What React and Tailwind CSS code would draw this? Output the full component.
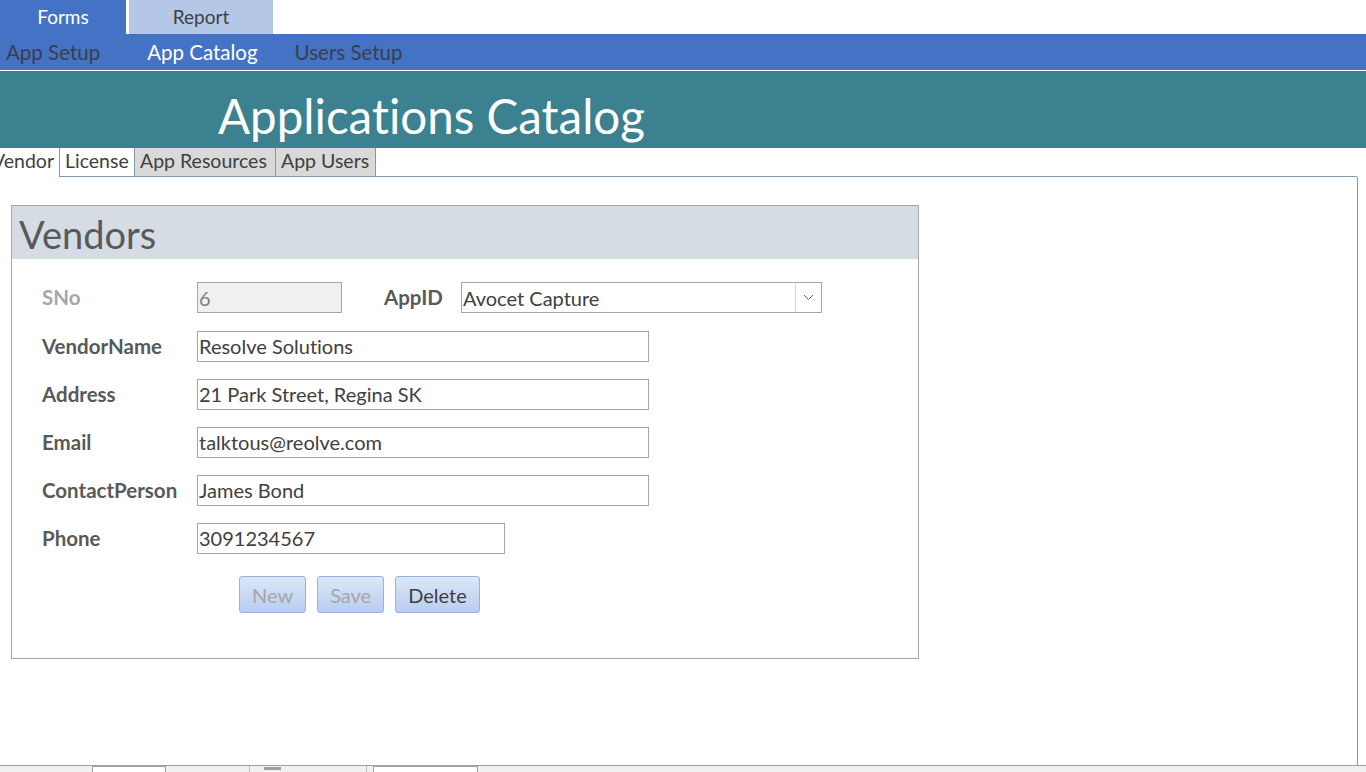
import React from 'react';

const font = { fontFamily: 'Lato, "Open Sans", sans-serif' };

const Field = ({ label, value, width = 'w-[452px]', muted }) => (
  <div className="flex items-center h-[30px]">
    <div className={`w-[185px] pl-[30px] text-[20.5px] font-bold whitespace-nowrap ${muted ? 'text-[#a6a6a6]' : 'text-[#595959]'}`}>
      {label}
    </div>
    <div className={`${width} h-[31px] border border-[#a6a6a6] bg-white flex items-center pl-[1px] text-[20px] text-[#404040]`}>
      {value}
    </div>
  </div>
);

const Btn = ({ children, disabled }) => (
  <button
    className={`h-[37px] px-[12px] rounded-[3px] border border-[#95b3e0] bg-gradient-to-b from-[#dce7f8] to-[#b9cdf0] text-[20px] ${disabled ? 'text-[#a6a6a6]' : 'text-[#404040]'}`}
  >
    {children}
  </button>
);

export default function App() {
  return (
    <div style={font} className="w-[1366px] h-[772px] overflow-hidden bg-white flex flex-col [font-variant-ligatures:none]">
      {/* top tabs */}
      <div className="h-[34px] flex items-end">
        <div className="w-[126px] h-[34px] bg-[#4472c4] text-white text-[19px] flex items-center justify-center">Forms</div>
        <div className="w-[144px] h-[34px] ml-[3px] bg-[#b4c7e7] text-[#404040] text-[19px] flex items-center justify-center">Report</div>
      </div>
      <div className="h-[36px] bg-[#4472c4] flex items-center text-[20.5px]">
        <span className="ml-[6px] text-[#3b3f4a]">App Setup</span>
        <span className="ml-[47px] text-white">App Catalog</span>
        <span className="ml-[37px] text-[#3b3f4a]">Users Setup</span>
      </div>
      <div className="h-[1px] bg-white" />
      <div className="h-[77px] bg-[#3b8190] flex items-center pl-[218px] pt-[12px]">
        <span className="text-white text-[47.5px] leading-none">Applications Catalog</span>
      </div>

      {/* sub tabs */}
      <div className="h-[29px] flex items-stretch text-[19.5px] text-[#404040]">
        <div className="w-[59px] overflow-hidden flex items-center justify-end pr-[5px] pb-[3px] bg-white whitespace-nowrap">Vendor</div>
        <div className="w-[75px] flex items-center pl-[5px] pb-[3px] border-l border-[#8497b0] border-b bg-white">License</div>
        <div className="w-[141px] flex items-center pl-[5px] pb-[3px] bg-[#d9d9d9] border-l border-b border-[#8497b0] whitespace-nowrap">App Resources</div>
        <div className="w-[101px] flex items-center pl-[5px] pb-[3px] bg-[#d9d9d9] border-l border-r border-b border-[#8497b0] whitespace-nowrap">App Users</div>
        <div className="w-[981px] border-b border-[#8497b0]" />
      </div>

      {/* content */}
      <div className="flex-1 flex">
        <div className="w-[1358px] border-r border-[#8497b0] pt-[28px] pl-[11px]">
          <div className="w-[908px] h-[454px] border border-[#a6a6a6] flex flex-col">
            <div className="h-[53px] bg-[#d6dce4] flex items-center pl-[7px] pt-[3px] text-[38px] text-[#595959]">Vendors</div>
            <div className="flex flex-col gap-[18px] pt-[23px]">
              <div className="flex items-center">
                <Field label="SNo" value={<span className="text-[#7f7f7f]">6</span>} width="w-[145px] !bg-[#f0f0f0]" muted />
                <div className="ml-[42px] w-[77px] text-[20.5px] font-bold text-[#595959]">AppID</div>
                <div className="w-[361px] h-[31px] border border-[#a6a6a6] flex items-center">
                  <span className="flex-1 pl-[1px] text-[20px] text-[#404040]">Avocet Capture</span>
                  <div className="w-[26px] h-full border-l border-[#d9d9d9] flex items-center justify-center">
                    <svg width="11" height="7" viewBox="0 0 11 7"><path d="M1 1l4.5 4.5L10 1" fill="none" stroke="#606060" strokeWidth="1" /></svg>
                  </div>
                </div>
              </div>
              <Field label="VendorName" value="Resolve Solutions" />
              <Field label="Address" value="21 Park Street, Regina SK" />
              <Field label="Email" value="talktous@reolve.com" />
              <Field label="ContactPerson" value="James Bond" />
              <Field label="Phone" value="3091234567" width="w-[308px]" />
            </div>
            <div className="flex gap-[11px] pl-[227px] mt-[23px]">
              <Btn disabled>New</Btn>
              <Btn disabled>Save</Btn>
              <Btn>Delete</Btn>
            </div>
          </div>
        </div>
      </div>

      {/* status bar */}
      <div className="h-[7px] border-t border-[#a0a0a0] bg-[#f0f0f0] flex items-stretch">
        <div className="w-[92px]" />
        <div className="w-[74px] bg-white border-l border-r border-t border-[#a0a0a0]" />
        <div className="w-[84px] border-r border-[#c0c0c0]" />
        <div className="w-[14px]" />
        <div className="w-[17px] bg-[#a0a0a0] h-[3px] mt-[1px]" />
        <div className="w-[86px] border-r border-[#c0c0c0]" />
        <div className="w-[6px]" />
        <div className="w-[105px] bg-white border-l border-r border-t border-[#a0a0a0]" />
      </div>
    </div>
  );
}
